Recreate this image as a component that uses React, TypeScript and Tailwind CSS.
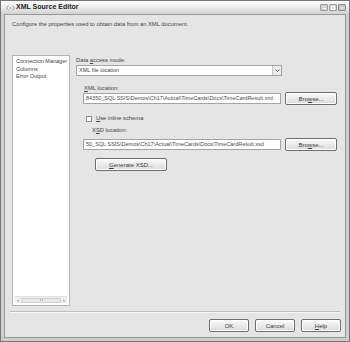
import React from 'react';

function Btn({ children, className = '' }: { children: React.ReactNode; className?: string }) {
  return (
    <div
      className={
        'flex items-center justify-center rounded-[2px] border border-[#6e6e6e] bg-linear-to-b from-[#fbfbfb] to-[#dadada] text-[6px] leading-none text-[#3a3a3a] shadow-[inset_0_0_0_1px_#ffffff] ' +
        className
      }
    >
      {children}
    </div>
  );
}

function Field({ value }: { value: string }) {
  return (
    <div className="flex h-[11px] w-[198px] items-center overflow-hidden whitespace-nowrap border border-[#a4a4a4] bg-white pl-[2px] text-[5.5px] text-[#4a4a4a]">
      {value}
    </div>
  );
}

export default function App() {
  return (
    <div className="h-[342px] w-[350px] bg-white font-['Liberation_Sans',Arial,sans-serif] text-[#3a3a3a]">
      <div className="flex h-[342px] w-[350px] flex-col border border-[#767676] bg-[#cdcdcd]">
        {/* Title bar */}
        <div className="flex h-[13px] items-center bg-linear-to-b from-[#fdfdfd] via-[#ececec] to-[#d2d2d2] pl-[5px] pr-[3px]">
          <svg width="9" height="6" viewBox="0 0 9 6" className="mr-[1px]">
            <path d="M2.5 0.8 L0.6 3 L2.5 5.2" fill="none" stroke="#8a8a8a" strokeWidth="0.9" />
            <path d="M6.5 0.8 L8.4 3 L6.5 5.2" fill="none" stroke="#8a8a8a" strokeWidth="0.9" />
            <circle cx="4.5" cy="3" r="0.8" fill="#8a8a8a" />
          </svg>
          <span className="text-[7px] font-bold text-[#222]">XML Source Editor</span>
          <div className="ml-auto flex gap-[1px]">
            <div className="flex h-[7px] w-[8px] items-end justify-center rounded-[1px] border border-[#9a9a9a] bg-[#d4d4d4] pb-[1px]">
              <div className="h-px w-[3px] bg-white" />
            </div>
            <div className="flex h-[7px] w-[8px] items-center justify-center rounded-[1px] border border-[#9a9a9a] bg-[#d4d4d4]">
              <div className="h-[4px] w-[4px] border border-white" />
            </div>
            <div className="flex h-[7px] w-[8px] items-center justify-center rounded-[1px] border border-[#8a8a8a] bg-[#c6c6c6] text-[6px] leading-none text-white">
              ×
            </div>
          </div>
        </div>

        {/* Client area */}
        <div className="mx-[3px] mb-[3px] flex flex-1 flex-col border border-[#9a9a9a] bg-[#e5e5e5]">
          <div className="h-[40px] pl-[7px] pt-[6px] text-[5.8px] leading-[7px] text-[#444]">
            Configure the properties used to obtain data from an XML document.
          </div>

          <div className="flex h-[251px] gap-[6px] pl-[7px]">
            {/* Left nav */}
            <div className="flex w-[58px] flex-col border border-[#b4b4b4] bg-white">
              <div className="flex-1 overflow-hidden whitespace-nowrap px-[3px] pt-[2px] text-[5.5px] leading-[7.5px] text-[#444]">
                <div>Connection Manager</div>
                <div>Columns</div>
                <div>Error Output</div>
              </div>
              <div className="mx-[2px] mb-[2px] flex h-[7px] items-center border-t border-[#e0e0e0] bg-[#f0f0f0] px-[2px]">
                <span className="text-[6px] leading-none text-[#555]">‹</span>
                <div className="mx-[2px] flex h-[5px] flex-1 items-center justify-center rounded-[1px] border border-[#d0d0d0] bg-[#e8e8e8]">
                  <div className="h-[2px] w-[3px] border-x border-[#b8b8b8]" />
                </div>
                <span className="text-[6px] leading-none text-[#555]">›</span>
              </div>
            </div>

            {/* Right side */}
            <div className="flex w-[262px] flex-col text-[5.8px] leading-[7px] text-[#444]">
              <div className="pt-[2px]">
                Data <u>a</u>ccess mode:
              </div>
              <div className="mt-[1px] flex h-[11px] w-[206px] items-center border border-[#a4a4a4] bg-white pl-[2px]">
                <span className="flex-1 text-[5.5px]">XML file location</span>
                <div className="flex h-[9px] w-[9px] items-center justify-center border-l border-[#c4c4c4] bg-[#ececec]">
                  <svg width="5" height="3" viewBox="0 0 5 3">
                    <path d="M0.5 0.5 L2.5 2.5 L4.5 0.5" fill="none" stroke="#555" strokeWidth="0.9" />
                  </svg>
                </div>
              </div>

              <div className="ml-[8px] mt-[9px]">
                <u>X</u>ML location:
              </div>
              <div className="ml-[7px] flex items-center gap-[4px]">
                <Field value="84350_SQL SSIS\Demos\Ch17\Actual\TimeCards\Docs\TimeCardResult.xml" />
                <Btn className="h-[13px] w-[52px]">
                  Bro<u>w</u>se...
                </Btn>
              </div>

              <div className="ml-[10px] mt-[10px] flex h-[7px] items-center gap-[4px]">
                <div className="h-[6px] w-[6px] border border-[#8e8e8e] bg-white" />
                <span>
                  <u>U</u>se inline schema
                </span>
              </div>

              <div className="ml-[16px] mt-[5px]">
                X<u>S</u>D location:
              </div>
              <div className="ml-[7px] mt-[4px] flex items-center gap-[4px]">
                <Field value="50_SQL SSIS\Demos\Ch17\Actual\TimeCards\Docs\TimeCardResult.xsd" />
                <Btn className="h-[13px] w-[52px]">
                  Bro<u>w</u>se...
                </Btn>
              </div>

              <Btn className="ml-[19px] mt-[7px] h-[13px] w-[72px]">
                <u>G</u>enerate XSD...
              </Btn>
            </div>
          </div>

          <div className="mx-[5px] mt-[5px] border-t border-[#bdbdbd] border-b border-b-[#f7f7f7]" />

          <div className="mt-[6px] flex justify-end gap-[6px] pr-[4px]">
            <Btn className="h-[13px] w-[40px]">OK</Btn>
            <Btn className="h-[13px] w-[40px]">Cancel</Btn>
            <Btn className="h-[13px] w-[40px]">
              <u>H</u>elp
            </Btn>
          </div>
        </div>
      </div>
    </div>
  );
}
